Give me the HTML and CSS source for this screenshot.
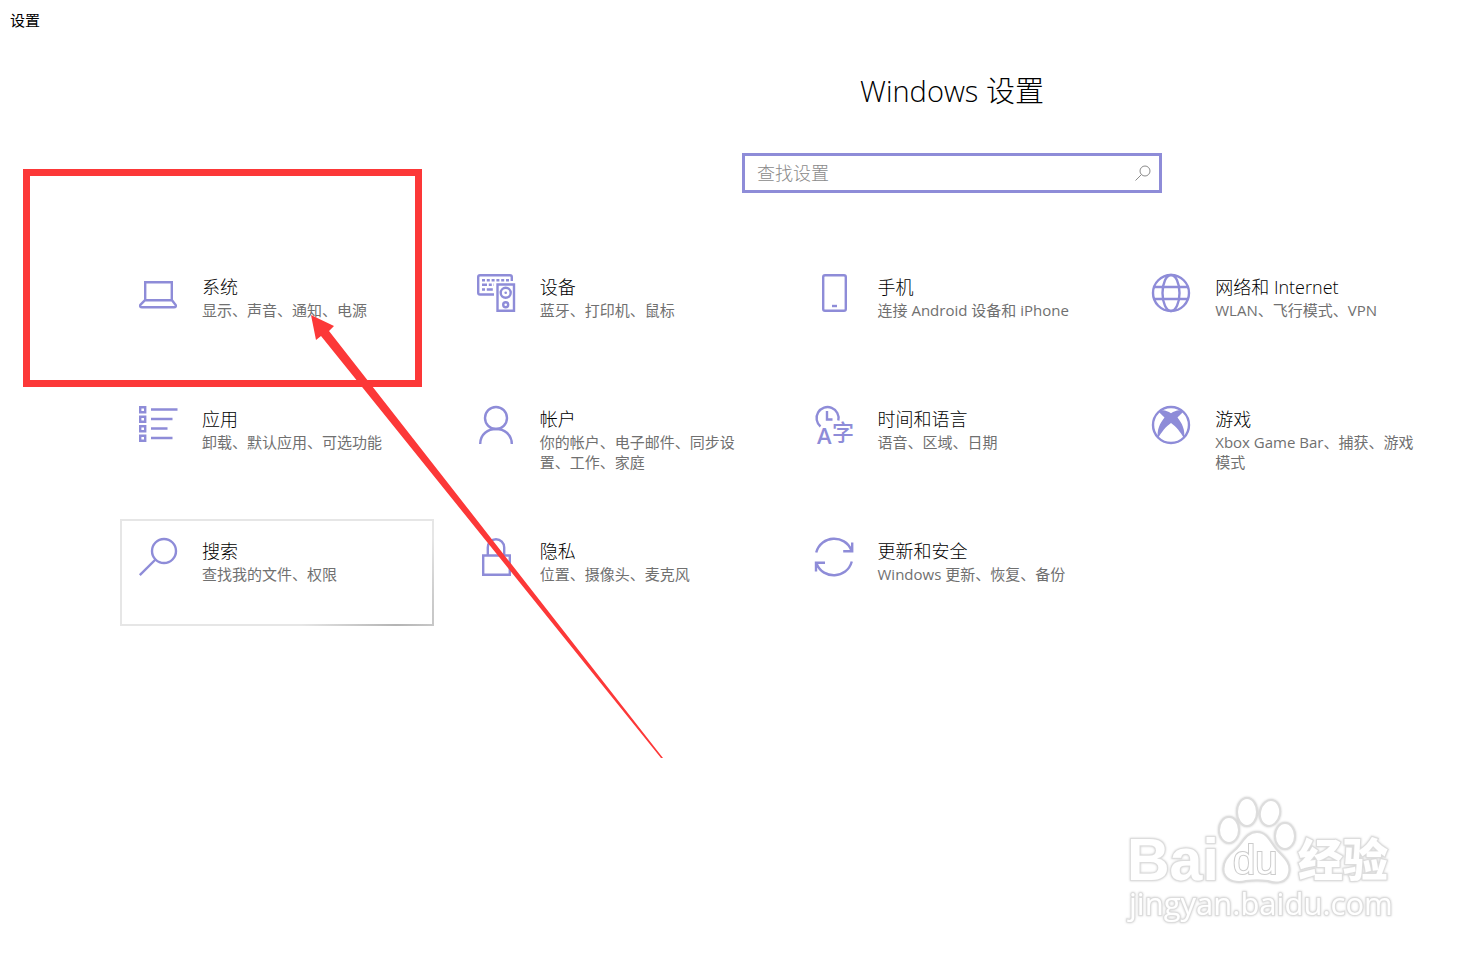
FILE: index.html
```html
<!DOCTYPE html>
<html lang="zh-CN">
  <head>
    <meta charset="utf-8" />
    <meta name="viewport" content="width=device-width, initial-scale=1" />
    <title>设置</title>
    <link rel="stylesheet" href="styles.css">
  </head>
  <body>
    <div class="titlebar">设置</div>

    <header class="header">
      <h1>Windows 设置</h1>
      <form class="search">
        <input type="text" id="find" aria-label="查找设置" placeholder="查找设置" />
        <button type="submit" aria-label="搜索">
          <svg width="16" height="16" viewBox="0 0 16 16">
            <circle cx="10" cy="6" r="5" />
            <path d="M6.500 9.500L.5 15.500" />
          </svg>
        </button>
      </form>
    </header>

    <main class="grid">
      <a class="tile" href="#system">
        <svg class="icon" viewBox="0 0 38 38">
          <path d="M6.200 26V8.200h26.600V26M6 26.200h27M6 26.200L1.300 31q-.8 2.200 1.700 2.200h32q2.500 0 1.700-2.200L33 26.200" />
        </svg>
        <div class="text">
          <h2>系统</h2>
          <p>显示、声音、通知、电源</p>
        </div>
      </a>

      <a class="tile" href="#devices">
        <svg class="icon" viewBox="0 0 38 38">
          <path d="M17 20.500H3q-1.800 0-1.800-1.800V3Q1.200 1.200 3 1.200h30q1.800 0 1.800 1.800v4" />
          <path d="M5 6.200h27" stroke-dasharray="3 1.800" />
          <path d="M5 10.800h12" stroke-dasharray="5 1.800 3 1.800" />
          <path d="M5 15.500h12" stroke-dasharray="3 1.800 6 1.800" />
          <path d="M20.500 10.500h16.500v26.200H20.500z" />
          <circle cx="28.700" cy="18.800" r="5" />
          <circle cx="28.700" cy="18.800" r="1.300" class="fill" />
          <circle cx="28.700" cy="30.800" r="2.500" />
        </svg>
        <div class="text">
          <h2>设备</h2>
          <p>蓝牙、打印机、鼠标</p>
        </div>
      </a>

      <a class="tile" href="#phone">
        <svg class="icon" viewBox="0 0 38 38">
          <rect x="8.200" y="1.200" width="22.600" height="35.600" rx="1.800" />
          <path d="M17 32h5" />
        </svg>
        <div class="text">
          <h2>手机</h2>
          <p>连接 Android 设备和 iPhone</p>
        </div>
      </a>

      <a class="tile" href="#network">
        <svg class="icon" viewBox="0 0 38 38">
          <circle cx="19" cy="19" r="18" />
          <ellipse cx="19" cy="19" rx="8.500" ry="18" />
          <path d="M2.500 13h33M2.500 25h33" />
        </svg>
        <div class="text">
          <h2>网络和 Internet</h2>
          <p>WLAN、飞行模式、VPN</p>
        </div>
      </a>

      <a class="tile" href="#apps">
        <svg class="icon" viewBox="0 0 38 38">
          <path d="M1.200 1.200h5v5h-5zM1.200 10.700h5v5h-5zM1.200 20.200h5v5h-5zM1.200 29.700h5v5h-5z" />
          <path d="M12 3.500h26.500M12 13h21.500M12 22.500h16.500M12 32h21.500" />
        </svg>
        <div class="text">
          <h2>应用</h2>
          <p>卸载、默认应用、可选功能</p>
        </div>
      </a>

      <a class="tile" href="#accounts">
        <svg class="icon" viewBox="0 0 38 38">
          <circle cx="19" cy="12" r="11" />
          <path d="M3.200 38c0-20 31.600-20 31.600 0" />
        </svg>
        <div class="text">
          <h2>帐户</h2>
          <p>你的帐户、电子邮件、同步设置、工作、家庭</p>
        </div>
      </a>

      <a class="tile" href="#time">
        <svg class="icon" viewBox="0 0 38 38">
          <path d="M5.500 20.500a11 11 0 1 1 17.800-6M12 5v8.500h5.500" />
          <text x="2" y="38" class="latin">A</text>
          <text x="17" y="34" class="han">字</text>
        </svg>
        <div class="text">
          <h2>时间和语言</h2>
          <p>语音、区域、日期</p>
        </div>
      </a>

      <a class="tile" href="#gaming">
        <svg class="icon" viewBox="0 0 38 38">
          <circle cx="19" cy="19" r="18" />
          <path class="fill" d="M7 5.500C11 3 15 5 19 7.200 23 5 27 3 31 5.500 31 6.500 29 8 25.500 11.500 30 17 33.500 24 32 32.500 29 26.500 24 20.500 19 17 14 20.500 9 26.500 6 32.500 4.500 24 8 17 12.500 11.500 9 8 7 6.500 7 5.500z" />
        </svg>
        <div class="text">
          <h2>游戏</h2>
          <p>Xbox Game Bar、捕获、游戏模式</p>
        </div>
      </a>

      <a class="tile active" href="#search">
        <svg class="icon" viewBox="0 0 38 38">
          <circle cx="25" cy="13" r="12" />
          <path d="M16.500 21.500L.8 37.200" />
        </svg>
        <div class="text">
          <h2>搜索</h2>
          <p>查找我的文件、权限</p>
        </div>
      </a>

      <a class="tile" href="#privacy">
        <svg class="icon" viewBox="0 0 38 38">
          <path d="M6.200 17.500h26.600v19.300H6.200zM10.800 17V9.500a8.200 8.200 0 0 1 16.400 0V17" />
        </svg>
        <div class="text">
          <h2>隐私</h2>
          <p>位置、摄像头、麦克风</p>
        </div>
      </a>

      <a class="tile" href="#update">
        <svg class="icon" viewBox="0 0 38 38">
          <path d="M1.200 14.500C6-3 30-4 36.500 12.500M37.200 4.500v8.800h-9M36.800 23.500C32 41 8 42 1.500 25.500M1 33.500v-8.800h9" />
        </svg>
        <div class="text">
          <h2>更新和安全</h2>
          <p>Windows 更新、恢复、备份</p>
        </div>
      </a>
    </main>

    <!-- red marker box and arrow -->
    <div class="marker"></div>
    <svg class="arrow" width="352" height="444" viewBox="0 0 352 444">
      <path d="M0 0L23 11L18 16L352 443L350 443L10 21L5 25z" />
    </svg>

    <svg class="watermark" width="280" height="140" viewBox="0 0 280 140">
      <text x="7" y="90" class="bai">Bai</text>
      <ellipse cx="109" cy="40" rx="10" ry="13" />
      <ellipse cx="127" cy="22" rx="10" ry="14" />
      <ellipse cx="150" cy="23" rx="10" ry="13" transform="rotate(12 150 23)" />
      <ellipse cx="165" cy="46" rx="10" ry="13" />
      <path d="M137 42c-11 0-14 11-22 18-9 7-13 15-11 23 3 9 14 10 22 8 8-1 14-1 22 0 8 3 19 2 21-8 2-9-3-14-11-22-7-7-10-19-21-19z" />
      <text x="113" y="84" class="du">du</text>
      <text x="178" y="87" class="exp">经验</text>
      <text x="9" y="125" class="url">jingyan.baidu.com</text>
    </svg>
  </body>
</html>
```
FILE: styles.css
```css
* {
  box-sizing: border-box;
}

body {
  margin: 0;
  min-height: 100vh;
  position: relative;
  overflow-x: hidden;
  background: #fff;
  color: #000;
  font-family: "Open Sans", "Noto Sans CJK SC", sans-serif;
}

h1,
h2,
p {
  margin: 0;
  font-weight: 400;
}

.titlebar {
  padding: 10px;
  font-size: 15px;
  line-height: 20px;
}

.header {
  display: flex;
  flex-direction: column;
  align-items: center;
  gap: 42px;
  padding: 31px 0 62px 434px;
}

.header h1 {
  font-size: 29px;
  font-weight: 300;
  line-height: 40px;
}

.search {
  display: flex;
  align-items: center;
  width: 420px;
  height: 40px;
  border: 3px solid #8e8cd8;
}

.search input {
  flex: 1;
  min-width: 0;
  padding: 0 12px;
  border: 0;
  outline: 0;
  background: none;
  font: 300 18px "Open Sans", "Noto Sans CJK SC", sans-serif;
}

.search input::placeholder {
  color: #8a8a8a;
}

.search button {
  display: flex;
  padding: 0 8px;
  border: 0;
  background: none;
}

.search svg {
  fill: none;
  stroke: #8a8a8a;
}

.grid {
  display: grid;
  grid-template-columns: repeat(4, 1fr);
  gap: 25px 24px;
  padding: 0 23px 0 120px;
}

.tile {
  display: flex;
  align-items: flex-start;
  gap: 25px;
  min-height: 107px;
  padding: 17px 24px 17px 17px;
  border: 2px solid transparent;
  color: inherit;
  text-decoration: none;
}

.tile.active {
  background:
    linear-gradient(#fff, #fff) padding-box,
    radial-gradient(circle at 88% 100%, #b4b4b4, #e6e6e6 32%) border-box;
}

.icon {
  flex: none;
  width: 38px;
  height: 38px;
  overflow: visible;
  fill: none;
  stroke: #8e8cd8;
  stroke-width: 2.4px;
}

.icon .fill,
.icon text {
  fill: #8e8cd8;
  stroke: none;
}

.latin {
  font-size: 22px;
  font-weight: 600;
}

.han {
  font-size: 22px;
  font-weight: 500;
}

.text h2 {
  font-size: 18px;
  font-weight: 300;
  line-height: 26px;
}

.text p {
  color: #707070;
  font-size: 15px;
  line-height: 20px;
}

.marker {
  position: absolute;
  left: 23px;
  top: 169px;
  width: 399px;
  height: 218px;
  border: 7px solid #fc3838;
}

.arrow {
  position: absolute;
  left: 311px;
  top: 315px;
  fill: #fc3838;
}

.watermark {
  position: absolute;
  left: 1120px;
  top: 790px;
  fill: #fff;
  stroke: #ddd;
  stroke-width: 2px;
  filter: drop-shadow(0 0 1px #ccc);
}

.watermark text {
  paint-order: stroke;
}

.bai {
  font: 700 59px "Liberation Sans", sans-serif;
}

.du {
  font: 400 40px "Liberation Sans", sans-serif;
}

.watermark .du {
  stroke: #ccc;
}

.exp {
  font: 900 45px "Noto Sans CJK SC", sans-serif;
}

.url {
  font: 400 31px "Open Sans", sans-serif;
}
```
